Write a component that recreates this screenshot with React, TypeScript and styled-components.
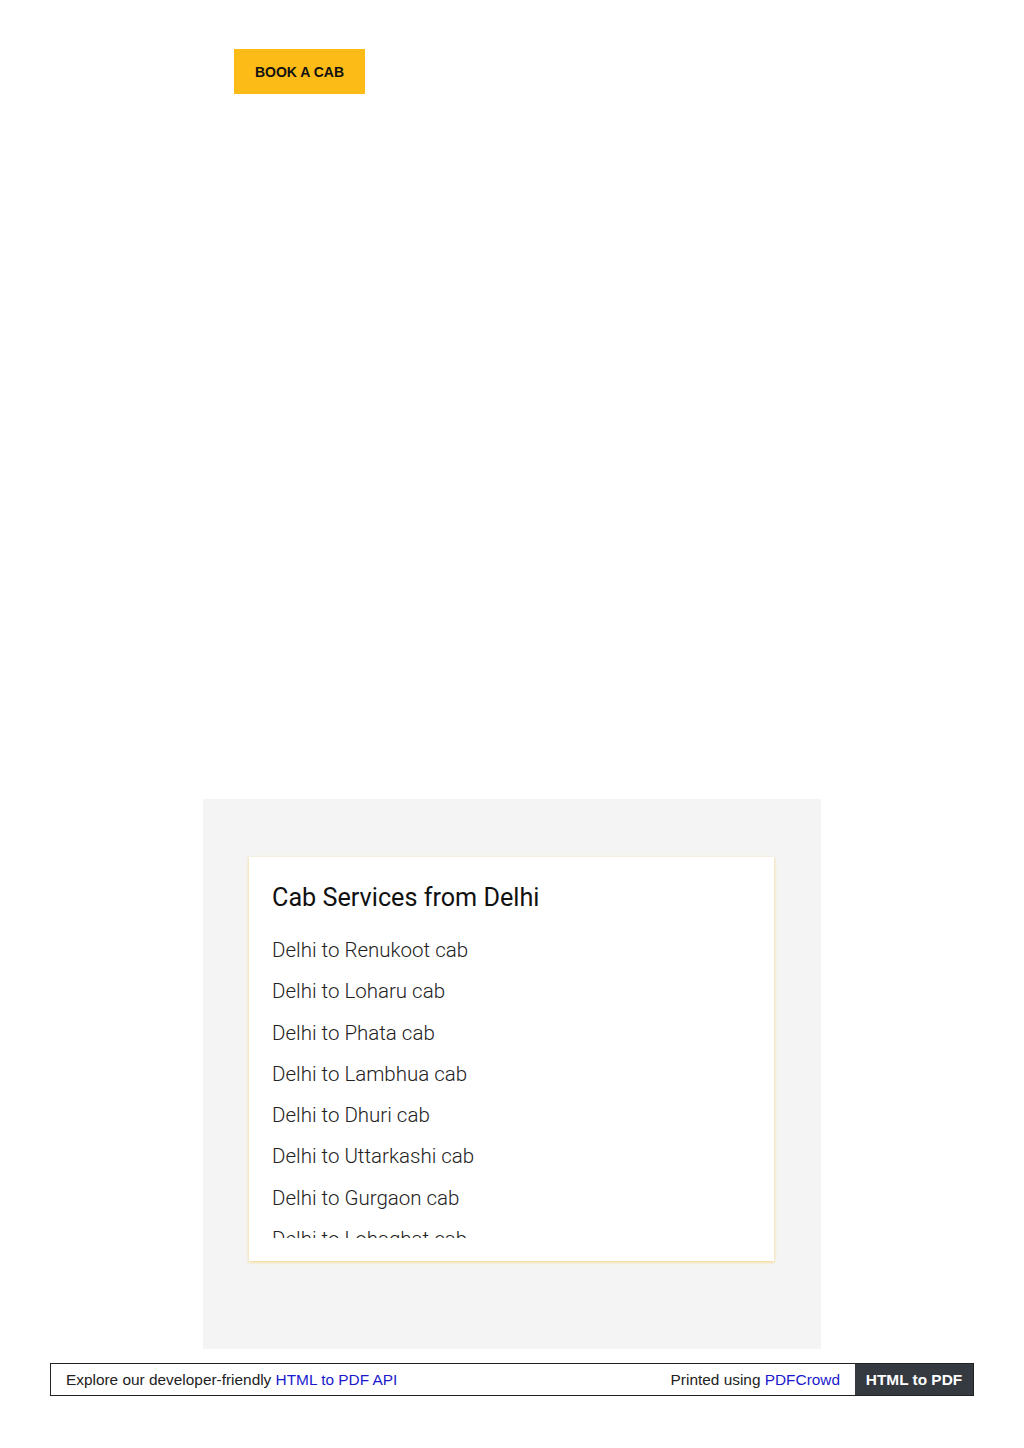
import React from "react";
import styled, { createGlobalStyle } from "styled-components";

const Global = createGlobalStyle`
  html, body { margin: 0; padding: 0; background: #ffffff; }
  body { font-family: Roboto, "Liberation Sans", Arial, sans-serif; }
`;

const Page = styled.div`
  width: 1024px;
  min-height: 1448px;
  display: flex;
  flex-direction: column;
`;

const Top = styled.div`
  padding: 49px 0 0 234px;
  height: 750px;
  box-sizing: border-box;
`;

const BookButton = styled.button`
  width: 131px;
  height: 45px;
  background: #fdbb17;
  border: none;
  padding: 0;
  font-family: "Liberation Sans", Arial, sans-serif;
  font-weight: 700;
  font-size: 14px;
  color: #111;
`;

const Section = styled.section`
  margin: 49px 0 0 203px;
  width: 618px;
  height: 550px;
  background: #f4f4f4;
  box-sizing: border-box;
  padding: 58px 47px 0 46px;
`;

const Card = styled.div`
  background: #fff;
  box-shadow: 0 1px 3px 0 rgba(253, 187, 23, 0.55);
  height: 404px;
  box-sizing: border-box;
  padding: 24px 23px 0 23px;
`;

const Title = styled.h2`
  margin: 0;
  font-family: Roboto, sans-serif;
  font-weight: 400;
  font-size: 25.2px;
  line-height: 34px;
  color: #111;
`;

const List = styled.ul`
  list-style: none;
  margin: 15px 0 0 0;
  padding: 0;
  height: 308px;
  overflow: hidden;
`;

const Item = styled.li`
  font-family: Roboto, sans-serif;
  font-weight: 300;
  font-size: 20.5px;
  line-height: 41.3px;
  color: #222;
`;

const Footer = styled.div`
  margin: 14px 0 0 50px;
  width: 924px;
  height: 33px;
  box-sizing: border-box;
  border: 1px solid #222;
  display: flex;
  align-items: stretch;
  font-family: "Liberation Sans", Arial, sans-serif;
  font-size: 15.4px;
  color: #222;
`;

const FootLeft = styled.div`
  flex: 1;
  display: flex;
  align-items: center;
  padding-left: 15px;
`;

const FootRight = styled.div`
  display: flex;
  align-items: center;
  padding-right: 15px;
`;

const Link = styled.span`
  color: #1a1acc;
`;

const Dark = styled.div`
  width: 118px;
  background: #343a40;
  color: #fff;
  font-weight: 700;
  display: flex;
  align-items: center;
  justify-content: center;
`;

const items = [
  "Delhi to Renukoot cab",
  "Delhi to Loharu cab",
  "Delhi to Phata cab",
  "Delhi to Lambhua cab",
  "Delhi to Dhuri cab",
  "Delhi to Uttarkashi cab",
  "Delhi to Gurgaon cab",
  "Delhi to Lohaghat cab",
  "Delhi to Nainital cab",
];

export default function App() {
  return (
    <Page>
      <Global />
      <Top>
        <BookButton>BOOK A CAB</BookButton>
      </Top>
      <Section>
        <Card>
          <Title>Cab Services from Delhi</Title>
          <List>
            {items.map((t) => (
              <Item key={t}>{t}</Item>
            ))}
          </List>
        </Card>
      </Section>
      <Footer>
        <FootLeft>
          Explore our developer-friendly&nbsp;<Link>HTML to PDF API</Link>
        </FootLeft>
        <FootRight>
          Printed using&nbsp;<Link>PDFCrowd</Link>
        </FootRight>
        <Dark>HTML to PDF</Dark>
      </Footer>
    </Page>
  );
}
